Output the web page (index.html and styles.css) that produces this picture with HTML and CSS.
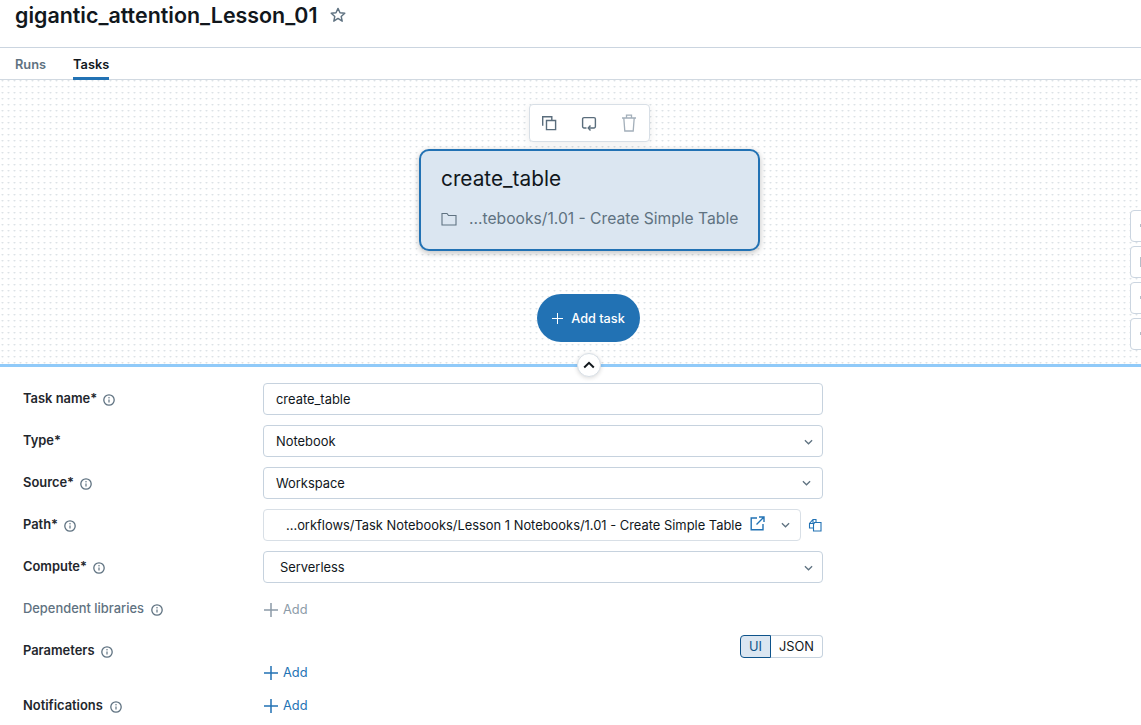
FILE: index.html
```html
<!DOCTYPE html>
<html lang="en">
<head>
<meta charset="utf-8">
<title>gigantic_attention_Lesson_01</title>
<link rel="stylesheet" href="styles.css">
</head>
<body>
<svg class="defs" width="0" height="0" aria-hidden="true">
  <symbol id="info" viewBox="0 0 12 12"><circle cx="6" cy="6" r="5.2" fill="none" stroke="currentColor" stroke-width="1.300"/><path d="M6 5.400v3" stroke="currentColor" stroke-width="1.200" fill="none"/><circle cx="6" cy="3.700" r=".75" fill="currentColor"/></symbol>
  <symbol id="chev" viewBox="0 0 10 6"><path d="M1 1l4 4 4-4" fill="none" stroke="currentColor" stroke-width="1.400"/></symbol>
  <symbol id="plus" viewBox="0 0 14 14"><path d="M7 0v14M0 7h14" fill="none" stroke="currentColor" stroke-width="1.500"/></symbol>
  <symbol id="plus-thin" viewBox="0 0 12 12"><path d="M6 0v12M0 6h12" fill="none" stroke="currentColor" stroke-width="1.100"/></symbol>
</svg>
<header class="head">
  <h1 class="title">gigantic_attention_Lesson_01</h1>
  <svg class="star" width="16" height="16" viewBox="0 0 16 16"><path d="M8 1.400l2 4.400 4.800.5-3.600 3.200 1 4.700L8 11.400l-4.200 2.800 1-4.700L1.200 6.300 6 5.800z" fill="none" stroke="currentColor" stroke-width="1.400" stroke-linejoin="round"/></svg>
</header>
<nav class="tabs">
  <span class="tab">Runs</span>
  <span class="tab tab-on">Tasks</span>
</nav>
<section class="canvas">
  <div class="toolbar">
    <svg class="tool" width="16" height="16" viewBox="0 0 16 16"><path d="M1.700 10.800V1.700h9.100v3.500M5.500 5.500h9.100v9.100H5.500z" fill="none" stroke="currentColor" stroke-width="1.400"/></svg>
    <svg class="tool" width="16" height="16" viewBox="0 0 16 16"><path d="M5.500 13H3a1.400 1.400 0 0 1-1.400-1.400V4A1.400 1.400 0 0 1 3 2.600h10A1.400 1.400 0 0 1 14.400 4v7.600A1.400 1.400 0 0 1 13 13H7.500" fill="none" stroke="currentColor" stroke-width="1.400"/><path d="M9.500 10.500L7.200 13l2.300 2.400" fill="none" stroke="currentColor" stroke-width="1.400"/></svg>
    <svg class="tool tool-dim" width="16" height="18" viewBox="0 0 16 18"><path d="M1 4h14M5.500 4V1.200h5V4M2.800 4l1 13h8.400l1-13" fill="none" stroke="currentColor" stroke-width="1.300"/></svg>
  </div>
  <div class="node">
    <div class="node-name">create_table</div>
    <div class="node-path">
      <svg class="folder" width="16" height="14" viewBox="0 0 16 14"><path d="M1 1.500h5L7.500 3.500H15v9.500H1z" fill="none" stroke="currentColor" stroke-width="1.100"/></svg>
      <span>...tebooks/1.01 - Create Simple Table</span>
    </div>
  </div>
  <button class="add-task" type="button"><svg width="11" height="11"><use href="#plus-thin"/></svg>Add task</button>
  <div class="side">
    <span class="side-btn side-a"></span><span class="side-btn side-b"></span><span class="side-btn side-a"></span><span class="side-btn side-a"></span>
  </div>
</section>
<div class="divider"><span class="collapse"><svg width="12" height="8" viewBox="0 0 12 8"><path d="M1.200 6.500L6 1.800l4.800 4.700" fill="none" stroke="currentColor" stroke-width="2"/></svg></span></div>
<main class="form">
  <div class="row">
    <label class="lab">Task name* <svg class="i"><use href="#info"/></svg></label>
    <div class="field">create_table</div>
  </div>
  <div class="row">
    <label class="lab">Type*</label>
    <div class="field sel">Notebook<svg class="ch"><use href="#chev"/></svg></div>
  </div>
  <div class="row">
    <label class="lab">Source* <svg class="i"><use href="#info"/></svg></label>
    <div class="field sel">Workspace<svg class="ch ch-left"><use href="#chev"/></svg></div>
  </div>
  <div class="row">
    <label class="lab">Path* <svg class="i"><use href="#info"/></svg></label>
    <div class="pathline">
      <div class="field field-path"><span class="pathtext">...orkflows/Task Notebooks/Lesson 1 Notebooks/1.01 - Create Simple Table</span>
        <svg class="ext" width="15" height="15" viewBox="0 0 15 15"><path d="M7 2H1.200v11.800H13V8M6.500 8.500L13.500 1.500M9 1h5v5" fill="none" stroke="currentColor" stroke-width="1.400"/></svg>
        <svg class="ch ch-path"><use href="#chev"/></svg>
      </div>
      <svg class="cp" width="14" height="14" viewBox="0 0 14 14"><path d="M5.500 10H1.500V5.500L5 1.500h3V4M6.500 4.500h6.500V13H5.500V6.500z M5 1.500V5.500H1.500" fill="none" stroke="currentColor" stroke-width="1.100"/></svg>
    </div>
  </div>
  <div class="row">
    <label class="lab">Compute* <svg class="i"><use href="#info"/></svg></label>
    <div class="field sel field-c">Serverless<svg class="ch"><use href="#chev"/></svg></div>
  </div>
  <div class="row">
    <label class="lab lab-dim">Dependent libraries <svg class="i"><use href="#info"/></svg></label>
    <span class="add add-dim"><svg width="14" height="14"><use href="#plus"/></svg>Add</span>
  </div>
  <div class="row row-par">
    <label class="lab">Parameters <svg class="i"><use href="#info"/></svg></label>
    <div class="par">
      <div class="seg"><span class="seg-a">UI</span><span class="seg-b">JSON</span></div>
      <span class="add"><svg width="14" height="14"><use href="#plus"/></svg>Add</span>
    </div>
  </div>
  <div class="row row-not">
    <label class="lab">Notifications <svg class="i"><use href="#info"/></svg></label>
    <span class="add"><svg width="14" height="14"><use href="#plus"/></svg>Add</span>
  </div>
</main>
</body>
</html>
```
FILE: styles.css
```css
* { box-sizing: border-box; }
html, body { margin: 0; height: 725px; overflow: hidden; }
body { font-family: Inter, "Liberation Sans", sans-serif; color: #11171c; background: #fff; font-size: 13px; }
.defs { position: absolute; }

.head { height: 48px; border-bottom: 1px solid #cbd5e0; display: flex; align-items: flex-start; padding: 2px 0 0 15px; gap: 13px; }
.title { margin: 0; font-size: 21.420px; line-height: 26px; font-weight: 600; }
.star { color: #5f7281; margin-top: 5px; }

.tabs { height: 32px; border-bottom: 1px solid #d1d9e1; display: flex; gap: 27px; padding-left: 15px; }
.tab { font-size: 12.800px; font-weight: 600; color: #5f7281; line-height: 33px; height: 32px; }
.tab-on { color: #11171c; border-bottom: 3px solid #2272b4; width: 36px; }

.canvas { position: relative; height: 284px; background-color: #fff; background-image: radial-gradient(circle at 2.500px 0.500px, #dde2e6 0, #e8ecef 0.800px, transparent 1.500px); background-size: 6px 6px; }
.toolbar { position: absolute; left: 529px; top: 24px; width: 121px; height: 38px; background: #fff; border: 1px solid #d8dfe6; border-radius: 4px; box-shadow: 0 2px 8px rgba(0,0,0,.08); display: flex; align-items: center; gap: 24px; padding: 0 0 0 11px; }
.tool { color: #5a6d7c; }
.tool-dim { color: #a3afba; }
.node { position: absolute; left: 419px; top: 69px; width: 341px; height: 102px; background: #dbe6f1; border: 2px solid #2272b4; border-radius: 10px; box-shadow: 0 2px 6px rgba(0,0,0,.25); padding: 15px 20px 0; }
.node-name { font-size: 20.800px; line-height: 26px; color: #11171c; }
.node-path { display: flex; align-items: center; gap: 12px; margin-top: 15px; font-size: 15.650px; line-height: 24px; color: #5f7281; white-space: nowrap; }
.folder { color: #5f7281; flex: none; }
.add-task { position: absolute; left: 537px; top: 214px; width: 103px; height: 48px; border: 0; border-radius: 24px; background: #2272b4; color: #fff; font: 500 12.700px Inter, sans-serif; display: flex; align-items: center; justify-content: center; gap: 8px; padding: 0; }
.side { position: absolute; right: -10px; top: 130px; display: flex; flex-direction: column; gap: 4px; }
.side-btn { position: relative; display: block; width: 21px; height: 32px; background: #fff; border: 1px solid #cbd5e0; border-radius: 4px; }
.side-btn::after { content: ""; position: absolute; left: 9px; top: 13px; width: 1px; height: 3px; background: #b4bec8; }
.side-b::after { top: 10px; height: 10px; width: 2px; }

.divider { position: relative; height: 3px; background: #90caf9; }
.collapse { position: absolute; left: 577px; top: -11px; width: 24px; height: 24px; border-radius: 50%; background: #fff; border: 1px solid #d8dfe6; box-shadow: 0 1px 4px rgba(0,0,0,.15); display: flex; align-items: center; justify-content: center; color: #11171c; }

.form { padding: 16px 0 0 23px; display: flex; flex-direction: column; gap: 10px; }
.row { display: flex; height: 32px; align-items: flex-start; }
.lab { width: 240px; flex: none; font-size: 12.900px; font-weight: 600; line-height: 16px; padding-top: 8px; display: flex; align-items: center; gap: 6px; color: #1f272d; }
.lab-dim { color: #5f7281; font-weight: 500; gap: 7px; }
.row-par .lab, .row-not .lab { gap: 7px; }
.i { width: 12px; height: 12px; color: #5f7281; margin-top: 2px; }
.field { position: relative; width: 560px; height: 32px; border: 1px solid #c6d2de; border-radius: 4px; padding: 0 12px; font-size: 12.900px; line-height: 32px; color: #11171c; background: #fff; }
.field-c { padding-left: 16px; }
.ch { position: absolute; right: 9px; top: 13px; width: 9px; height: 6px; color: #5f7281; }
.ch-left { right: 11px; top: 12px; }
.pathline { display: flex; align-items: center; gap: 7px; }
.field-path { width: 538px; padding-left: 22px; display: flex; align-items: flex-start; border-color: #d8dfe6; white-space: nowrap; }
.pathtext { line-height: 32px; }
.ext { position: absolute; left: 486px; top: 6px; color: #2272b4; }
.ch-path { right: 10px; top: 12px; }
.cp { color: #2272b4; }
.row-par { height: 56px; }
.row-not { margin-top: -11px; }
.add { display: inline-flex; align-items: center; gap: 5px; margin-left: 1px; font-size: 12.800px; line-height: 16px; color: #2272b4; padding-top: 9px; }
.add-dim { color: #8c9ba8; }
.par { width: 560px; display: flex; flex-direction: column; align-items: flex-start; }
.seg { align-self: flex-end; display: flex; height: 23px; font-size: 12.800px; line-height: 21px; }
.seg-a { width: 31px; text-align: center; background: #dbe6f1; color: #0e538b; border: 1px solid #0e538b; border-radius: 4px 0 0 4px; }
.seg-b { width: 52px; text-align: center; border: 1px solid #c6d2de; border-left: 0; border-radius: 0 4px 4px 0; }
.par .add { padding-top: 7px; }
.row-not .add { padding-top: 8px; }
```
